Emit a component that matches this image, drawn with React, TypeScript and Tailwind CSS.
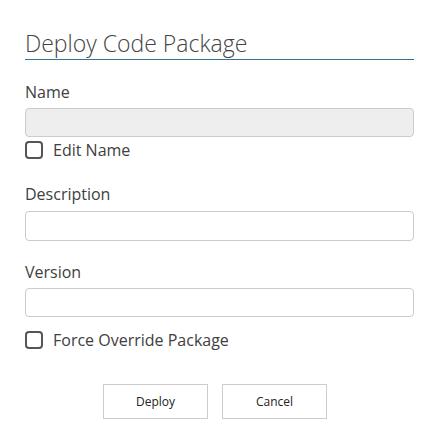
export default function App() {
  return (
    <div className="min-h-screen w-full bg-white font-['Open_Sans','Noto_Sans',sans-serif] text-[#404040]">
      <div className="px-[25px] pt-[29px]">
        <h1 className="border-b border-[#2f7391] pb-[2px] text-[23px] font-light leading-[28px] text-[#444]">
          Deploy Code Package
        </h1>

        <label className="mt-[22px] block text-[16px] leading-[20px]">Name</label>
        <input
          disabled
          className="mt-[6px] block h-[29px] w-full rounded-[4px] border border-[#ccc] bg-[#eee]"
        />
        <label className="mt-[3px] flex items-center gap-[10px] text-[16px] leading-[20px]">
          <span className="h-[18px] w-[18px] rounded-[4px] border-2 border-[#555]" />
          Edit Name
        </label>

        <label className="mt-[24px] block text-[16px] leading-[20px]">Description</label>
        <input className="mt-[7px] block h-[30px] w-full rounded-[4px] border border-[#ccc] bg-white" />

        <label className="mt-[21px] block text-[16px] leading-[20px]">Version</label>
        <input className="mt-[6px] block h-[29px] w-full rounded-[4px] border border-[#ccc] bg-white" />

        <label className="mt-[13px] flex items-center gap-[10px] text-[16px] leading-[20px]">
          <span className="h-[18px] w-[18px] rounded-[4px] border-2 border-[#555]" />
          Force Override Package
        </label>

        <div className="mt-[34px] flex gap-[14px] pl-[78px]">
          <button className="h-[35px] w-[105px] border border-[#ccc] bg-white text-[12px] text-[#222]">
            Deploy
          </button>
          <button className="h-[35px] w-[105px] border border-[#ccc] bg-white text-[12px] text-[#222]">
            Cancel
          </button>
        </div>
      </div>
    </div>
  );
}
